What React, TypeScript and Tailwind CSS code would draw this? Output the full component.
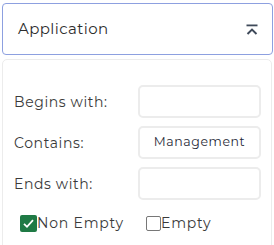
import React from "react";

export default function App() {
  const font = { fontFamily: "Montserrat, 'Open Sans', sans-serif" };
  return (
    <div className="w-[274px] h-[245px] bg-white overflow-hidden pl-[2px] pt-[3px] pr-[1px]" style={font}>
      <div className="h-[52px] border border-[#8da0e0] rounded-[4px] flex items-center justify-between pl-[15px] pr-[14px]">
        <span className="text-[15px] text-[#2d2d2d] tracking-[0.4px]">Application</span>
        <svg width="12" height="12" viewBox="0 0 12 12" className="mt-[2px]">
          <rect x="0.5" y="0.5" width="11" height="1.8" fill="#3f4a5a" />
          <path d="M1.5 10 L6 5.6 L10.5 10" stroke="#3f4a5a" strokeWidth="2" fill="none" />
        </svg>
      </div>
      <div className="mt-[4px] mr-[1px] h-[200px] border border-[#ececec] rounded-t-[5px] pt-[25px] pl-[11px] pr-[10px]">
        {[
          ["Begins with:", ""],
          ["Contains:", "Management"],
          ["Ends with:", ""],
        ].map(([label, val], i) => (
          <div key={i} className={"flex items-center justify-between " + (i > 0 ? "mt-[8px]" : "")}>
            <span className="text-[14px] text-[#3a3a3a] tracking-[0.6px] mt-[2px]">{label}</span>
            <div className="w-[123px] h-[33px] border-2 border-[#ececec] rounded-[5px] flex items-center justify-center text-[12.5px] text-[#1f2937] tracking-[0.6px]">
              {val}
            </div>
          </div>
        ))}
        <div className="flex items-center mt-[13px] pl-[6px]">
          <div className="w-[17px] h-[17px] rounded-[2px] bg-[#1f7a45] flex items-center justify-center">
            <svg width="13" height="13" viewBox="0 0 13 13">
              <path d="M2 6.8 L5 9.8 L11 3.2" stroke="white" strokeWidth="1.8" fill="none" />
            </svg>
          </div>
          <span className="text-[14px] text-[#3a3a3a] tracking-[0.8px]">Non Empty</span>
          <div className="ml-[22px] w-[15px] h-[15px] rounded-[2px] border-[1.5px] border-[#777]" />
          <span className="text-[14px] text-[#3a3a3a] tracking-[0.8px]">Empty</span>
        </div>
      </div>
    </div>
  );
}
